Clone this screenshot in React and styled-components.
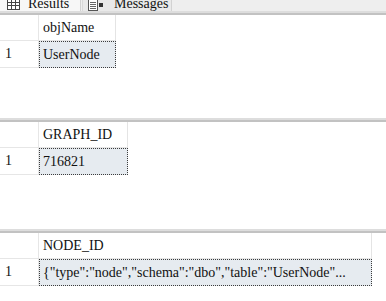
import React from 'react';
import styled, { createGlobalStyle } from 'styled-components';

const serif = "'Liberation Serif', 'DejaVu Serif', 'Times New Roman', serif";

const GlobalStyle = createGlobalStyle`
  html, body {
    margin: 0;
    padding: 0;
    background: #ffffff;
    overflow: hidden;
  }
  body {
    font-family: ${serif};
    color: #111111;
  }
`;

const Page = styled.div`
  width: 386px;
  height: 301px;
  overflow: hidden;
  background: #ffffff;
  display: flex;
  flex-direction: column;
  font-family: ${serif};
`;

const TabBar = styled.div`
  display: flex;
  height: 20px;
  margin-top: -9px;
  background: #eeeeee;
  flex-shrink: 0;
`;

const Tab = styled.div`
  display: flex;
  align-items: flex-start;
  gap: ${({ gap }) => gap}px;
  padding: 5px 8px 0 ${({ padLeft }) => padLeft}px;
  width: ${({ width }) => width}px;
  box-sizing: border-box;
  background: ${({ active }) => (active ? '#f7f7f7' : '#e9e9e9')};
  border-right: 1px solid #d2d2d2;
  border-left: ${({ active }) => (active ? 'none' : '1px solid #d9d9d9')};
  margin-left: ${({ active }) => (active ? 0 : 1)}px;
  font-family: ${serif};
  font-size: 14px;
  line-height: 16px;
`;

const TabIcon = styled.svg`
  margin-top: 3px;
  flex-shrink: 0;
`;

const Section = styled.div`
  height: ${({ height }) => height}px;
  flex-shrink: 0;
  display: flex;
  flex-direction: column;
`;

const Separator = styled.div`
  height: 0;
  border-top: 2px solid #dddddd;
  border-bottom: 2px solid #c2c2c2;
`;

const Grid = styled.div`
  display: grid;
  grid-template-columns: 39px ${({ colWidth }) => colWidth}px;
  grid-template-rows: 26px 27px;
  font-family: ${serif};
  font-size: 14px;
`;

const Corner = styled.div`
  border-right: 1px solid #e6e6e6;
  border-bottom: 1px solid #e6e6e6;
`;

const HeaderCell = styled.div`
  display: flex;
  align-items: center;
  padding-left: 4px;
  border-right: 1px solid #e4e4e4;
  border-bottom: 1px solid #e6e6e6;
  white-space: nowrap;
`;

const RowHeader = styled.div`
  display: flex;
  align-items: center;
  padding-left: 5px;
  border-right: 1px solid #e6e6e6;
  border-bottom: 1px solid #e6e6e6;
`;

const DataCell = styled.div`
  display: flex;
  align-items: center;
  padding-left: 3px;
  background: #e6ebf0;
  border: 1px dotted #3c3c3c;
  white-space: nowrap;
  overflow: hidden;
`;

const GridIcon = () => (
  <TabIcon width="13" height="11" viewBox="0 0 13 11">
    <rect x="0.5" y="0.5" width="12" height="10" fill="#ffffff" stroke="#444" />
    <line x1="0.5" y1="3.5" x2="12.5" y2="3.5" stroke="#444" />
    <line x1="0.5" y1="6.5" x2="12.5" y2="6.5" stroke="#444" />
    <line x1="4.5" y1="0.5" x2="4.5" y2="10.5" stroke="#444" />
    <line x1="8.5" y1="0.5" x2="8.5" y2="10.5" stroke="#444" />
  </TabIcon>
);

const MessageIcon = () => (
  <TabIcon width="15" height="12" viewBox="0 0 15 12">
    <rect x="0.5" y="0.5" width="9" height="11" fill="#ffffff" stroke="#555" />
    <line x1="2" y1="3.5" x2="8" y2="3.5" stroke="#666" />
    <line x1="2" y1="5.5" x2="8" y2="5.5" stroke="#666" />
    <line x1="2" y1="7.5" x2="8" y2="7.5" stroke="#666" />
    <line x1="2" y1="9.5" x2="8" y2="9.5" stroke="#666" />
    <rect x="11" y="4" width="4" height="4" fill="#333" />
  </TabIcon>
);

const results = [
  { column: 'objName', value: 'UserNode', width: 77, height: 107 },
  { column: 'GRAPH_ID', value: '716821', width: 89, height: 111 },
  {
    column: 'NODE_ID',
    value: '{"type":"node","schema":"dbo","table":"UserNode"...',
    width: 333,
    height: 70,
  },
];

const ResultGrid = ({ column, value, width, height }) => (
  <Section height={height}>
    <Separator />
    <Grid colWidth={width}>
      <Corner />
      <HeaderCell>{column}</HeaderCell>
      <RowHeader>1</RowHeader>
      <DataCell>{value}</DataCell>
    </Grid>
  </Section>
);

const App = () => (
  <>
    <GlobalStyle />
    <Page>
      <TabBar>
        <Tab active width={81} padLeft={7} gap={8}>
          <GridIcon />
          <span>Results</span>
        </Tab>
        <Tab width={90} padLeft={5} gap={11}>
          <MessageIcon />
          <span>Messages</span>
        </Tab>
      </TabBar>
      {results.map((r) => (
        <ResultGrid key={r.column} {...r} />
      ))}
    </Page>
  </>
);

export default App;
